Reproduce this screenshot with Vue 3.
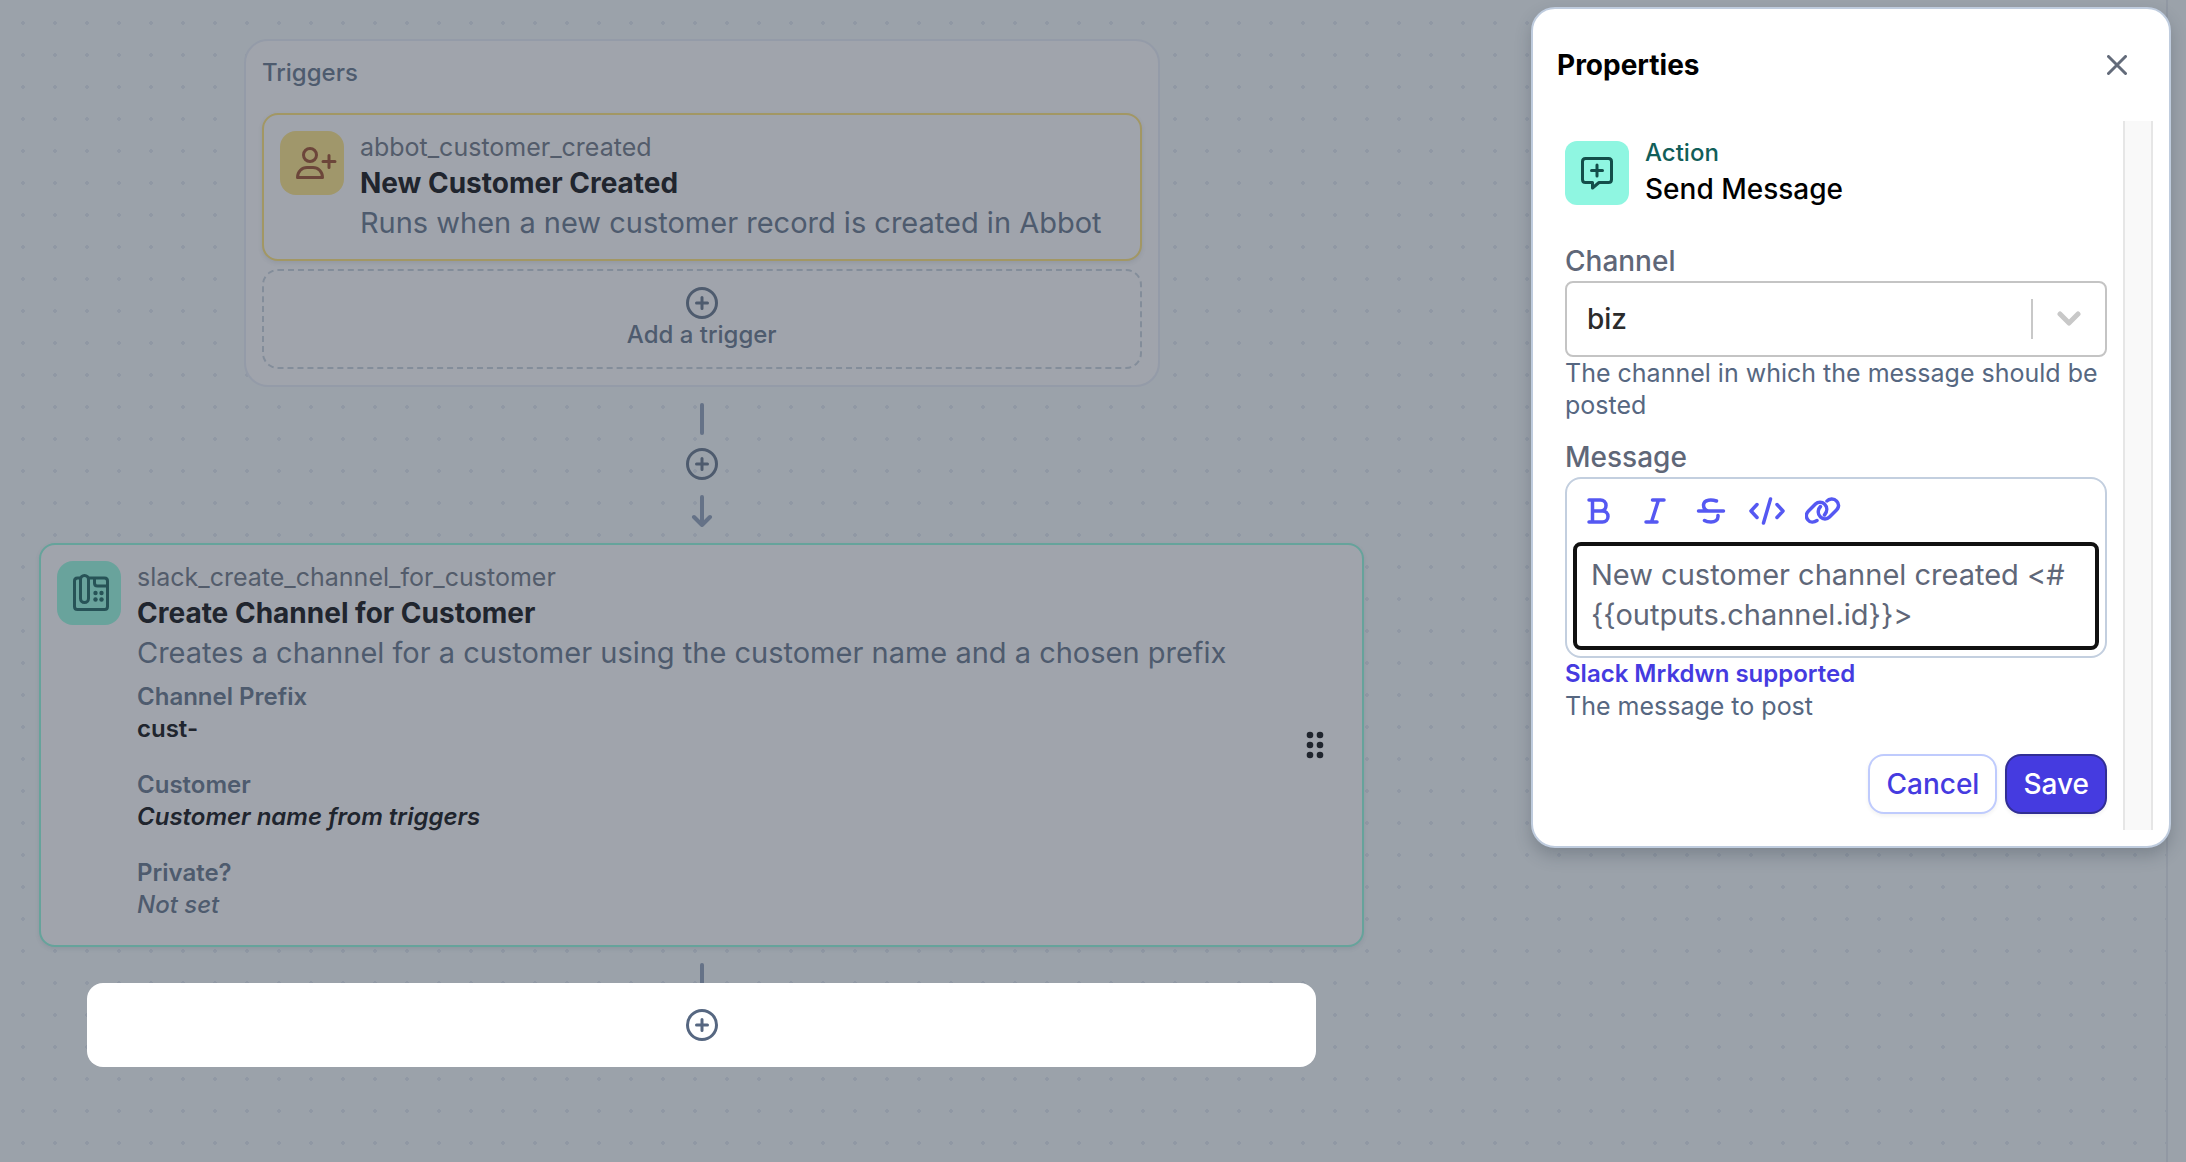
<script setup>
import { ref } from 'vue'

const channel = ref('biz')
const message = ref('New customer channel created <#\n{{outputs.channel.id}}>')

const fields = [
  { label: 'Channel Prefix', value: 'cust-', kind: 'plain' },
  { label: 'Customer', value: 'Customer name from triggers', kind: 'derived' },
  { label: 'Private?', value: 'Not set', kind: 'unset' }
]
</script>

<template>
  <div class="page">
    <main class="canvas">
      <div class="flow">
        <section class="triggers">
          <h2 class="triggers-title">Triggers</h2>
          <article class="card card-trigger">
            <span class="tile tile-yellow">
              <svg width="44" height="32" viewBox="0 0 44 32" fill="none" stroke="currentColor" stroke-width="3" stroke-linecap="round" stroke-linejoin="round">
                <circle cx="16" cy="8" r="6.5" />
                <path d="M3.500 30.500C3.500 24.500 8 20.500 13 20.500H19C24 20.500 28.500 24.500 28.500 30.500Z" />
                <path d="M35 8.500V20.500M29 14.500H41" />
              </svg>
            </span>
            <div class="card-body">
              <p class="slug">abbot_customer_created</p>
              <h3 class="card-title">New Customer Created</h3>
              <p class="summary">Runs when a new customer record is created in Abbot</p>
            </div>
          </article>
          <button type="button" class="add-trigger">
            <svg class="plus" viewBox="0 0 32 32" fill="none" stroke="currentColor" stroke-width="3" stroke-linecap="round">
              <circle cx="16" cy="16" r="14.500" /><path d="M16 10.500V21.500M10.500 16H21.500" />
            </svg>
            <span>Add a trigger</span>
          </button>
        </section>

        <div class="connector">
          <svg class="line" width="32" height="32" viewBox="0 0 32 32" fill="none" stroke="currentColor" stroke-width="4" stroke-linecap="round"><path d="M16 2V30" /></svg>
          <button type="button" class="insert" aria-label="Insert step">
            <svg class="plus" viewBox="0 0 32 32" fill="none" stroke="currentColor" stroke-width="3" stroke-linecap="round">
              <circle cx="16" cy="16" r="14.500" /><path d="M16 10.500V21.500M10.500 16H21.500" />
            </svg>
          </button>
          <svg class="line" width="32" height="32" viewBox="0 0 32 32" fill="none" stroke="currentColor" stroke-width="4" stroke-linecap="round" stroke-linejoin="round"><path d="M16 2V30M8 22L16 30L24 22" /></svg>
        </div>

        <article class="card card-action">
          <span class="tile tile-teal">
            <svg width="36" height="38" viewBox="0 0 36 38" fill="none" stroke="currentColor" stroke-width="3" stroke-linejoin="round">
              <path d="M7 4H4.500Q1.500 4 1.500 7V32.500Q1.500 35.500 4.500 35.500H31.500Q34.500 35.500 34.500 32.500V7Q34.500 4 31.500 4H15.500" />
              <rect x="7.500" y="1.500" width="8" height="27" rx="4" />
              <path d="M21.500 4V9Q21.500 12 24.500 12H34.500" />
              <g fill="currentColor" stroke="none">
                <circle cx="22.500" cy="19" r="2.200" /><circle cx="28.500" cy="19" r="2.200" />
                <circle cx="22.500" cy="25.500" r="2.200" /><circle cx="28.500" cy="25.500" r="2.200" />
              </g>
            </svg>
          </span>
          <div class="card-body">
            <p class="slug">slack_create_channel_for_customer</p>
            <h3 class="card-title">Create Channel for Customer</h3>
            <p class="summary">Creates a channel for a customer using the customer name and a chosen prefix</p>
            <dl class="fields">
              <div v-for="f in fields" :key="f.label">
                <dt>{{ f.label }}</dt>
                <dd :class="f.kind">{{ f.value }}</dd>
              </div>
            </dl>
          </div>
          <button type="button" class="handle" aria-label="Reorder step">
            <svg width="18" height="28" viewBox="0 0 18 28" fill="currentColor">
              <circle cx="4" cy="4" r="3.300" /><circle cx="14" cy="4" r="3.300" />
              <circle cx="4" cy="14" r="3.300" /><circle cx="14" cy="14" r="3.300" />
              <circle cx="4" cy="24" r="3.300" /><circle cx="14" cy="24" r="3.300" />
            </svg>
          </button>
        </article>

        <div class="tail">
          <span class="stub"></span>
          <button type="button" class="append" aria-label="Add step">
            <svg class="plus" viewBox="0 0 32 32" fill="none" stroke="currentColor" stroke-width="3" stroke-linecap="round">
              <circle cx="16" cy="16" r="14.500" /><path d="M16 10.500V21.500M10.500 16H21.500" />
            </svg>
          </button>
        </div>
      </div>
    </main>

    <aside class="panel">
      <header class="panel-head">
        <h2>Properties</h2>
        <button type="button" class="close" aria-label="Close">
          <svg width="20" height="20" viewBox="0 0 20 20" fill="none" stroke="currentColor" stroke-width="3" stroke-linecap="round"><path d="M1.500 1.500L18.500 18.500M18.500 1.500L1.500 18.500" /></svg>
        </button>
      </header>
      <div class="panel-scroll">
        <form class="form" @submit.prevent>
          <div class="step">
            <span class="tile tile-mint">
              <svg width="32" height="33" viewBox="0 0 32 33" fill="none" stroke="currentColor" stroke-width="3" stroke-linecap="round" stroke-linejoin="round">
                <path d="M4.500 1.500H27.500Q30.500 1.500 30.500 4.500V22.500Q30.500 25.500 27.500 25.500H18L11.500 31V25.500H4.500Q1.500 25.500 1.500 22.500V4.500Q1.500 1.500 4.500 1.500Z" />
                <path d="M16 8V19M10.500 13.500H21.500" />
              </svg>
            </span>
            <div>
              <p class="step-kind">Action</p>
              <h3 class="step-name">Send Message</h3>
            </div>
          </div>

          <div class="field">
            <label for="channel">Channel</label>
            <div class="select">
              <select id="channel" v-model="channel"><option>biz</option></select>
              <span class="select-mark">
                <svg width="24" height="16" viewBox="0 0 24 16" fill="none" stroke="currentColor" stroke-width="5" stroke-linecap="round" stroke-linejoin="round"><path d="M3 3L12 12L21 3" /></svg>
              </span>
            </div>
            <p class="help">The channel in which the message should be posted</p>
          </div>

          <div class="field">
            <label for="message">Message</label>
            <div class="editor">
              <div class="toolbar">
                <button type="button" aria-label="Bold">
                  <svg width="32" height="32" viewBox="0 0 32 32"><path d="M6 5H17.500A5.500 5.500 0 0 1 17.500 16H9.500M17.500 16H19.500A5.500 5.500 0 0 1 19.500 27H6M9.500 5V27" /></svg>
                </button>
                <button type="button" aria-label="Italic">
                  <svg width="32" height="32" viewBox="0 0 32 32"><path d="M13.500 5H25M7 27H18M19.500 5L12.500 27" /></svg>
                </button>
                <button type="button" aria-label="Strikethrough">
                  <svg width="32" height="32" viewBox="0 0 32 32"><path d="M3.500 16H28.500M21.500 6C17 4.500 9 4 8.500 10C8.500 13 10 15 13 16M23 20.500C23.500 25.500 19.500 27 16 27C13 27 11 26.500 9.500 25.500" /></svg>
                </button>
                <button type="button" aria-label="Code">
                  <svg class="wide" width="36" height="32" viewBox="0 0 36 32"><path d="M8 9.500L2 16L8 22.500M28 9.500L34 16L28 22.500M21.500 4L14.500 28" /></svg>
                </button>
                <button type="button" aria-label="Link">
                  <svg class="wide" width="36" height="32" viewBox="0 0 36 32"><path d="M12 25.500C9 27.500 5 27.500 3 25C0.500 22 1 18.500 3.500 16L10.500 9C13 6.500 17 6.500 19.500 9C22.500 12 22.500 16.500 19.500 20M22 6C24 3.500 29 3 31.500 6C34.500 9 34 12.500 31.500 15L24.500 22C22 24.500 18 24.500 15.500 22C12.500 19 12.500 15 15.500 11.500" /></svg>
                </button>
              </div>
              <textarea id="message" v-model="message" rows="2"></textarea>
            </div>
            <a class="docs" href="#mrkdwn">Slack Mrkdwn supported</a>
            <p class="help">The message to post</p>
          </div>

          <div class="actions">
            <button type="button" class="btn">Cancel</button>
            <button type="submit" class="btn btn-primary">Save</button>
          </div>
        </form>
        <div class="gutter"></div>
      </div>
    </aside>
  </div>
</template>

<style>
html, body { background: #9ba2aa; }
</style>

<style scoped>
* { box-sizing: border-box; }
h2, h3, p, dl, dd { margin: 0; }
button { padding: 0; border: 0; background: none; color: inherit; font: inherit; cursor: pointer; }
svg { display: block; flex: none; }

.page {
  position: relative;
  min-height: 100vh;
  padding-right: 18px;
  background: #9ba2aa;
  color: #20252e;
  font: 400 25px/32px Inter, "Open Sans", sans-serif;
}
.canvas {
  min-height: 100vh;
  padding: 39px;
  border-right: 2px solid #9198a3;
  background: radial-gradient(circle, #9098a4 2px, transparent 2px) 7px 7px / 32px 32px;
}
.flow {
  display: flex;
  flex-direction: column;
  align-items: center;
  width: max-content;
}

.triggers {
  display: flex;
  flex-direction: column;
  gap: 8px;
  padding: 16px;
  border: 2px solid #949ba8;
  border-radius: 24px;
  background: #a0a4ac;
}
.triggers-title {
  margin-bottom: 16px;
  color: #4e5b6e;
  font-size: 24px;
  font-weight: 500;
  line-height: 32px;
}
.card {
  display: flex;
  gap: 16px;
  padding: 16px;
  border: 2px solid;
  border-radius: 16px;
  background: #a0a4ac;
  box-shadow: 0 2px 4px rgba(60, 70, 90, 0.12);
}
.card-trigger { border-color: #a29764; padding-right: 38px; }
.card-action { align-self: stretch; border-color: #66a39b; }
.tile {
  display: flex;
  flex: none;
  align-items: center;
  justify-content: center;
  width: 64px;
  height: 64px;
  border-radius: 16px;
}
.tile-yellow { padding-left: 8px; background: #a0976b; color: #6c463a; }
.tile-teal { padding-left: 4px; background: #69a39c; color: #275357; }
.tile-mint { border-radius: 12px; background: #8ff6e1; color: #134e4a; }
.card-body { flex: 1; }
.slug { color: #535c6b; }
.card-title { font-size: 28px; font-weight: 700; line-height: 40px; }
.summary { color: #4e5b6e; font-size: 29px; line-height: 40px; }
.fields { display: flex; flex-direction: column; gap: 24px; padding: 8px 0; }
.fields dt { color: #4e5b6e; font-size: 24px; font-weight: 600; }
.fields dd { font-size: 24px; font-weight: 600; }
.fields .derived { font-style: italic; }
.fields .unset { color: #4e5b6e; font-style: italic; font-weight: 500; }
.handle { align-self: center; margin: 0 8px 0 50px; padding: 8px 14px; cursor: grab; }

.add-trigger {
  display: flex;
  flex-direction: column;
  align-items: center;
  padding: 16px;
  border: 2px dashed #838d9a;
  border-radius: 16px;
  color: #4e5b6e;
  font-size: 24px;
  font-weight: 500;
}
.plus { width: 32px; height: 32px; }
.connector {
  display: flex;
  flex-direction: column;
  align-items: center;
  padding: 16px 0;
  color: #4e5b6e;
}
.line { color: #657287; }
.insert { padding: 13px; }
.insert + .line { margin-top: 2px; }
.tail {
  display: flex;
  flex-direction: column;
  align-items: center;
  align-self: stretch;
  padding: 16px 48px;
}
.stub { width: 4px; height: 20px; border-radius: 2px 2px 0 0; background: #657287; }
.append {
  display: flex;
  align-items: center;
  justify-content: center;
  align-self: stretch;
  height: 84px;
  border-radius: 16px;
  background: #fff;
  color: #566781;
}

.panel {
  position: absolute;
  top: 7px;
  right: 15px;
  width: 640px;
  padding-bottom: 16px;
  border: 2px solid #bfccde;
  border-radius: 24px;
  background: #fff;
  box-shadow: 0 8px 16px rgba(40, 50, 65, 0.25);
  color: #000;
}
.panel-head {
  display: flex;
  align-items: center;
  justify-content: space-between;
  height: 112px;
  padding: 0 28px 0 24px;
}
.panel-head h2 { font-size: 28px; font-weight: 700; line-height: 40px; }
.close { padding: 14px; color: #636b7a; }
.panel-scroll { display: flex; padding: 0 16px; }
.form {
  display: flex;
  flex: 1;
  flex-direction: column;
  min-width: 0;
  padding: 16px;
}
.gutter {
  width: 30px;
  border: solid #e6e6e6;
  border-width: 0 2px;
  background: #f9f9f9;
}
.step { display: flex; align-items: center; gap: 16px; margin-bottom: 32px; }
.step-kind { color: #115e59; font-size: 24px; font-weight: 500; }
.step-name { font-size: 28px; font-weight: 500; line-height: 40px; }
.field { display: flex; flex-direction: column; margin-bottom: 16px; }
.field label { color: #5f6778; font-size: 28px; font-weight: 500; line-height: 40px; }
.help { color: #566781; }
.select {
  display: flex;
  align-items: center;
  height: 76px;
  border: 2px solid #c4c4c4;
  border-radius: 8px;
}
.select select {
  flex: 1;
  height: 72px;
  padding: 0 20px;
  border: 0;
  outline: 0;
  appearance: none;
  background: none;
  color: #2b2b2b;
  font: 500 28px/40px Inter, "Open Sans", sans-serif;
}
.select-mark {
  display: flex;
  align-items: center;
  justify-content: center;
  width: 74px;
  height: 40px;
  border-left: 2px solid #c8c8c8;
  color: #c8c8c8;
}
.editor {
  display: flex;
  flex-direction: column;
  padding: 6px;
  border: 2px solid #c3cfdf;
  border-radius: 16px;
}
.toolbar { display: flex; gap: 24px; padding: 10px; }
.toolbar button { display: flex; justify-content: center; width: 32px; height: 32px; }
.toolbar svg {
  fill: none;
  stroke: #5558f2;
  stroke-width: 3.500;
  stroke-linecap: round;
  stroke-linejoin: round;
}
.toolbar + textarea { margin-top: 5px; }
.editor textarea {
  display: block;
  width: 100%;
  height: 108px;
  padding: 9px 14px;
  border: 4px solid #111;
  border-radius: 8px;
  outline: 0;
  resize: none;
  overflow: hidden;
  background: #fff;
  color: #5f6778;
  font: 400 29px/40px Inter, "Open Sans", sans-serif;
}
.docs { align-self: flex-start; color: #453be0; font-size: 24px; font-weight: 600; text-decoration: none; }
.actions { display: flex; justify-content: flex-end; gap: 8px; margin-top: 16px; }
.btn {
  padding: 8px 16px;
  border: 2px solid #bfcbfd;
  border-radius: 16px;
  background: #fff;
  box-shadow: 0 2px 4px rgba(0, 0, 0, 0.06);
  color: #453be0;
  font-size: 28px;
  font-weight: 500;
  line-height: 40px;
}
.btn-primary { border-color: #312e94; background: #453be0; color: #fff; }
</style>
